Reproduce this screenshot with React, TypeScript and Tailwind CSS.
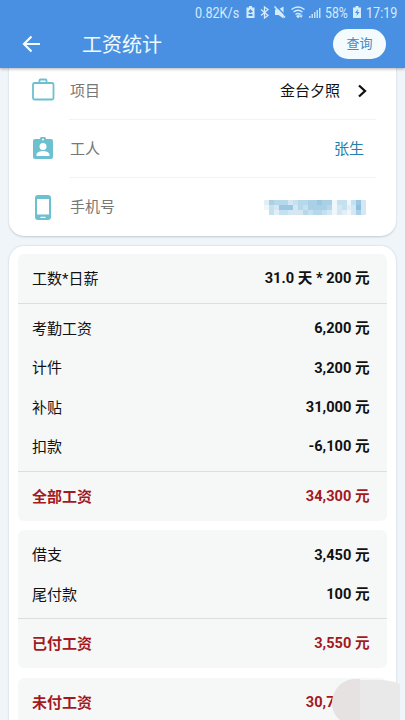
import type { ReactNode } from "react";

interface Line {
  label: string;
  value: string;
}

const attendance: Line[] = [
  { label: "考勤工资", value: "6,200 元" },
  { label: "计件", value: "3,200 元" },
  { label: "补贴", value: "31,000 元" },
  { label: "扣款", value: "-6,100 元" },
];

const paid: Line[] = [
  { label: "借支", value: "3,450 元" },
  { label: "尾付款", value: "100 元" },
];

// opacity of each mosaic cell over the phone number
const mosaic = [
  [2, 6, 5, 5, 5, 3, 4, 5, 5, 6, 6, 7, 6, 6, 1, 4, 4, 1, 4, 7, 3],
  [1, 4, 3, 7, 7, 7, 3, 5, 4, 6, 6, 6, 6, 5, 1, 3, 4, 2, 3, 8, 3],
  [0, 4, 2, 4, 4, 3, 3, 3, 5, 4, 5, 5, 4, 3, 1, 3, 2, 1, 3, 6, 3],
];

function StatusBar() {
  return (
    <div className="relative h-[26px] text-[15px] leading-[26px] text-[#d3ecfb]">
      <span className="absolute left-[195px] top-0 origin-left scale-x-[0.84] whitespace-nowrap">0.82K/s</span>
      <svg className="absolute left-[240px] top-0" width="165" height="26" viewBox="240 0 165 26" fill="currentColor">
        <path fillRule="evenodd" d="M249 6h3v1.500h2.500v10.500h-8V7.500h2.500zM250.500 9l-2.500 3h1.500v1h2v-1h1.500zM248.500 14v2h4v-2z" />
        <path d="M261 9.500l7 6-3.500 2.500V7l3.500 2.500-7 6" fill="none" stroke="currentColor" strokeWidth="1.300" />
        <path d="M275 9.500h3.500l5-3v12l-5-3.500H275z" />
        <path d="M276 6l11 11" stroke="#4a90e2" strokeWidth="1.500" />
        <path d="M274.500 6.500l10.500 11" stroke="currentColor" strokeWidth="1.500" />
        <path d="M291.500 9.500q6.500-5 13 0M293.500 12q4.500-3.500 9 0M295.500 14.500q2.500-2 5 0" fill="none" stroke="currentColor" strokeWidth="1.400" />
        <path d="M296.500 16l2-1 1 1.500-1.500 1.500zM301 13v4M299.500 15.500l1.500 2 1.500-2" stroke="currentColor" strokeWidth=".6" />
        <path d="M309 16h1.500v2H309zM311.500 14h1.500v4h-1.500zM314 12h1.500v6H314zM316.500 10h1.500v8h-1.500zM319 8h1.500v10H319z" opacity=".85" />
        <path fillRule="evenodd" d="M355.500 6h3v1.500h2.500v10.500h-8V7.500h2.500zM358 9l-3 4h2l-.5 3 3-4h-2z" />
      </svg>
      <span className="absolute left-[325px] top-0 origin-left scale-x-[0.82] whitespace-nowrap">58%</span>
      <span className="absolute left-[366px] top-0 origin-left scale-x-[0.84] whitespace-nowrap">17:19</span>
    </div>
  );
}

function InfoRow({ icon, label, children }: { icon: ReactNode; label: string; children: ReactNode }) {
  return (
    <div className="flex h-[58.500px] items-center pl-[20px]">
      <div className="flex w-[28px] justify-center text-[#6cc0d0]">{icon}</div>
      <div className="ml-[12px] mr-[20px] flex h-full flex-1 items-center justify-between border-b border-[#f3f3f3] pt-[2px] pl-px">
        <span className="text-[15px] text-[#777777]">{label}</span>
        {children}
      </div>
    </div>
  );
}

function MoneyRow({ label, value }: Line) {
  return (
    <div className="flex h-[39.400px] items-center justify-between pt-[2px] pr-[17.500px] pl-[14px]">
      <span>{label}</span>
      <span className="text-[14.600px] font-bold">{value}</span>
    </div>
  );
}

function TotalRow({ label, value }: Line) {
  return (
    <div className="flex h-[49px] items-center justify-between pt-px pr-[17.500px] pl-[14px] font-bold text-[#a3191f]">
      <span>{label}</span>
      <span className="text-[14.600px]">{value}</span>
    </div>
  );
}

export default function App() {
  return (
    <div className="relative h-[720px] w-[405px] overflow-hidden bg-[#eff5f9] font-['Roboto','Noto_Sans_CJK_SC',sans-serif]">
      <header className="relative z-10 h-[68px] bg-[#4a90e2] shadow-[0_1px_3px_rgba(0,0,0,0.3)]">
        <StatusBar />
        <div className="flex h-[36px] items-center pl-[22px] pr-[19px]">
          <svg width="20" height="18" viewBox="0 0 20 18" fill="none" stroke="#f2fcff" strokeWidth="2.200">
            <path d="M18 9H2.500M9.500 1.500L2 9l7.500 7.500" />
          </svg>
          <h1 className="ml-[40px] flex-1 pt-[2px] text-[20px] leading-[30px] text-[#effbff]">工资统计</h1>
          <button className="h-[30px] w-[53px] rounded-full bg-[#f4fbff] text-[13px] text-[#4788bd]">查询</button>
        </div>
      </header>

      <section className="mx-[9px] -mt-[7px] h-[175px] rounded-b-[15px] bg-white shadow-[0_1px_2px_rgba(60,80,100,0.25)]">
        <InfoRow
          label="项目"
          icon={
            <svg width="24" height="24" viewBox="0 0 24 24" fill="none" stroke="currentColor" strokeWidth="1.800">
              <rect x="2" y="5" width="20.500" height="16.500" rx="1.500" />
              <path d="M8.500 5V2.500Q8.500 1.500 9.500 1.500h5q1 0 1 1V5" />
            </svg>
          }
        >
          <span className="flex items-center text-[15px] text-[#111111]">
            金台夕照
            <svg className="ml-[17px] mr-[8px]" width="11" height="14" viewBox="0 0 11 14" fill="none" stroke="currentColor" strokeWidth="2.300">
              <path d="M2 1.500L8 7l-6 5.500" />
            </svg>
          </span>
        </InfoRow>
        <InfoRow
          label="工人"
          icon={
            <svg className="mb-[2px]" width="20" height="22" viewBox="0 0 20 22" fill="currentColor">
              <path fillRule="evenodd" d="M2 2h5a3 2.500 0 0 1 6 0h5q2 0 2 2v16q0 2-2 2H2q-2 0-2-2V4q0-2 2-2zM10 1.500a1 1 0 1 0 0 2 1 1 0 0 0 0-2zM10 6a3.500 3.500 0 1 0 0 7 3.500 3.500 0 0 0 0-7zM3.500 19h13v-1.500c0-2.500-4.500-3.500-6.500-3.500s-6.500 1-6.500 3.500z" />
            </svg>
          }
        >
          <span className="mr-[12px] text-[15px] text-[#2480ad]">张生</span>
        </InfoRow>
        <div className="flex h-[58px] items-center pl-[20px]">
          <div className="flex w-[28px] justify-center text-[#6cc0d0]">
            <svg width="16" height="25" viewBox="0 0 16 25" fill="currentColor">
              <path fillRule="evenodd" d="M3 0h10q3 0 3 3v19q0 3-3 3H3q-3 0-3-3V3q0-3 3-3zM2 4v15.500h12V4zM5.500 21.700v1.300h5v-1.300z" />
            </svg>
          </div>
          <span className="ml-[13px] flex-1 pt-px text-[15px] text-[#777777]">手机号</span>
          <svg className="mr-[30px]" width="102" height="15" viewBox="0 0 21 3" preserveAspectRatio="none" shapeRendering="crispEdges" fill="#6fb1d6">
            {mosaic.map((row, y) =>
              row.map((level, x) => <rect key={`${x}-${y}`} x={x} y={y} width="1" height="1" opacity={level / 10} />)
            )}
          </svg>
        </div>
      </section>

      <section className="mx-[9px] mt-[10px] h-[500px] rounded-t-[15px] bg-white px-[9px] pt-[8px] text-[15px] text-[#111111] shadow-[0_0_2px_rgba(60,80,100,0.25)]">
        <div className="h-[267px] rounded-[6px] bg-[#f6f8f8]">
          <div className="flex h-[49.500px] items-center justify-between border-b border-[#dcdfdf] pt-[2px] pr-[17.500px] pl-[14px]">
            <span>工数*日薪</span>
            <span className="text-[14.600px] font-bold">31.0 天 * 200 元</span>
          </div>
          <div className="border-b border-[#dcdfdf] py-[5px]">
            {attendance.map((line) => (
              <MoneyRow key={line.label} {...line} />
            ))}
          </div>
          <TotalRow label="全部工资" value="34,300 元" />
        </div>

        <div className="mt-[9px] h-[138px] rounded-[6px] bg-[#f6f8f8]">
          <div className="border-b border-[#dcdfdf] pt-[5px] pb-[4px]">
            {paid.map((line) => (
              <MoneyRow key={line.label} {...line} />
            ))}
          </div>
          <TotalRow label="已付工资" value="3,550 元" />
        </div>

        <div className="mt-[10px] rounded-[6px] bg-[#f6f8f8]">
          <TotalRow label="未付工资" value="30,750 元" />
        </div>
      </section>

      <svg className="absolute bottom-0 right-[5px]" width="69" height="42" viewBox="331 678 69 42">
        <path d="M360 679h-5c-13 0-23 11-23 24 0 7 3 13 8 17h20z" fill="#e7e2e2" />
        <path d="M360 680q30-1 40 4v36h-40z" fill="#e9e9e9" />
      </svg>
    </div>
  );
}
